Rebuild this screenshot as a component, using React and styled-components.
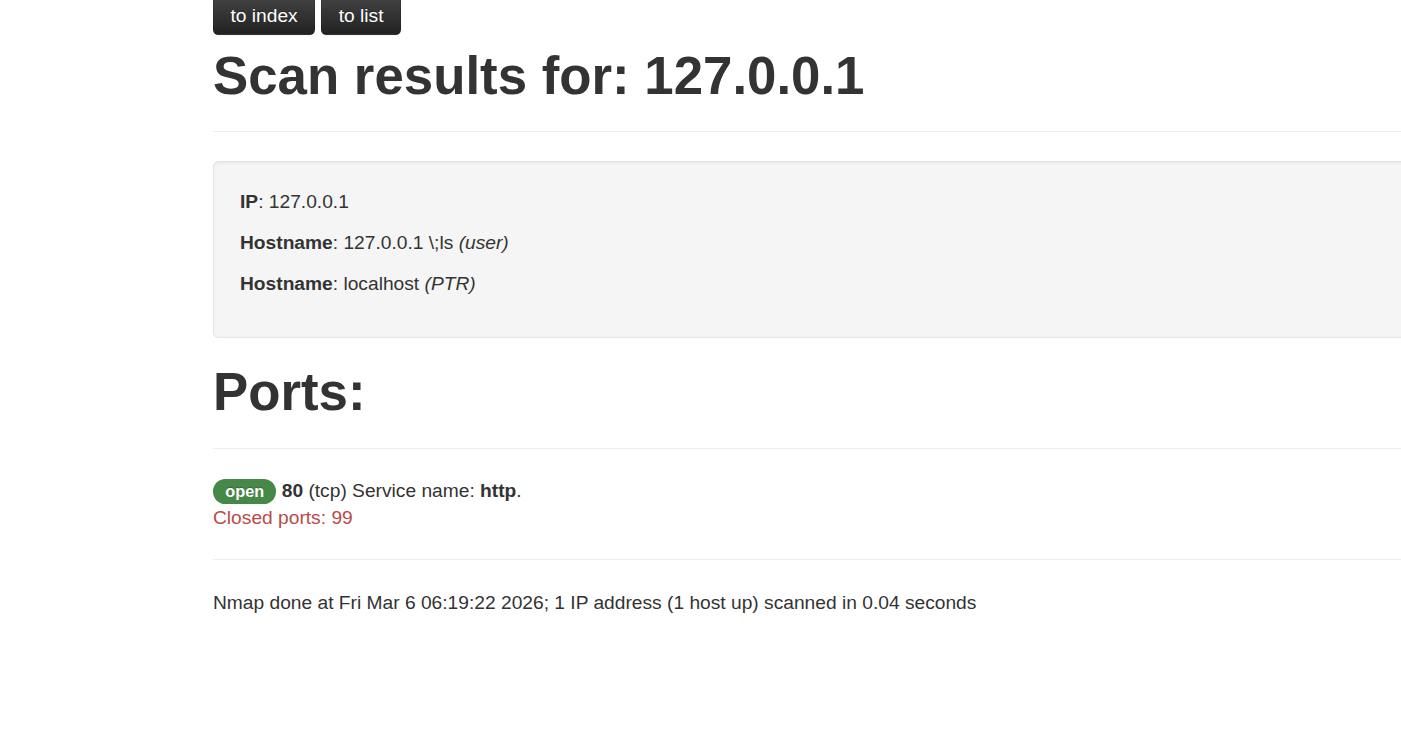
import React from "react";
import styled, { createGlobalStyle } from "styled-components";

const GlobalStyle = createGlobalStyle`
  html, body {
    margin: 0;
    padding: 0;
    background: #ffffff;
    overflow-x: hidden;
  }
  body {
    font-family: "Liberation Sans", Arial, Helvetica, sans-serif;
    font-size: 19.2px;
    line-height: 27.4px;
    color: #333333;
  }
`;

const Container = styled.div`
  margin-left: 213px;
  margin-top: -5px;
  width: 1289px;
`;

const NavBar = styled.div`
  display: flex;
  gap: 6px;
`;

const NavButton = styled.a`
  display: inline-block;
  box-sizing: border-box;
  padding: 5.5px 16.5px;
  font-size: 19.2px;
  line-height: 27.4px;
  color: #ffffff;
  text-decoration: none;
  text-shadow: 0 -1px 0 rgba(0, 0, 0, 0.25);
  background-color: #363636;
  background-image: linear-gradient(to bottom, #444444, #222222);
  border: 1px solid rgba(0, 0, 0, 0.1);
  border-bottom-color: rgba(0, 0, 0, 0.25);
  border-radius: 5.5px;
  box-shadow: inset 0 1px 0 rgba(255, 255, 255, 0.2), 0 1px 2px rgba(0, 0, 0, 0.05);
  cursor: pointer;
`;

const Heading = styled.h1`
  margin: 13.7px 0;
  font-size: 52.8px;
  line-height: 54.8px;
  font-weight: bold;
  color: #333333;
`;

const Rule = styled.hr`
  margin: 27.4px 0;
  border: 0;
  border-top: 1px solid #eeeeee;
  border-bottom: 1px solid #ffffff;
`;

const Well = styled.div`
  padding: 26px;
  margin-bottom: 27.4px;
  background-color: #f5f5f5;
  border: 1px solid #e3e3e3;
  border-radius: 5.5px;
  box-shadow: inset 0 1.4px 1.4px rgba(0, 0, 0, 0.05);
`;

const Para = styled.p`
  margin: 0 0 13.7px;
`;

const Label = styled.b`
  font-weight: bold;
`;

const Note = styled.i`
  font-style: italic;
`;

const PortBlock = styled.div``;

const Badge = styled.span`
  display: inline-block;
  padding: 2.7px 12.3px;
  font-size: 16.24px;
  font-weight: bold;
  line-height: 19.2px;
  color: #ffffff;
  text-shadow: 0 -1px 0 rgba(0, 0, 0, 0.25);
  white-space: nowrap;
  vertical-align: baseline;
  background-color: ${(p) => p.$color};
  border-radius: 12.3px;
`;

const Closed = styled.span`
  color: #b94a48;
`;

export default function App() {
  return (
    <>
      <GlobalStyle />
      <Container>
        <NavBar>
          <NavButton>to index</NavButton>
          <NavButton>to list</NavButton>
        </NavBar>
        <Heading>Scan results for: 127.0.0.1</Heading>
        <Rule />
        <Well>
          <Para>
            <Label>IP</Label>: 127.0.0.1
          </Para>
          <Para>
            <Label>Hostname</Label>: 127.0.0.1 \;ls <Note>(user)</Note>
          </Para>
          <Para>
            <Label>Hostname</Label>: localhost <Note>(PTR)</Note>
          </Para>
        </Well>
        <Heading>Ports:</Heading>
        <Rule />
        <PortBlock>
          <Badge $color="#468847">open</Badge> <Label>80</Label> (tcp) Service name:{" "}
          <Label>http</Label>.
          <br />
          <Closed>Closed ports: 99</Closed>
        </PortBlock>
        <Rule />
        <Para>
          Nmap done at Fri Mar 6 06:19:22 2026; 1 IP address (1 host up) scanned in 0.04 seconds
        </Para>
      </Container>
    </>
  );
}
